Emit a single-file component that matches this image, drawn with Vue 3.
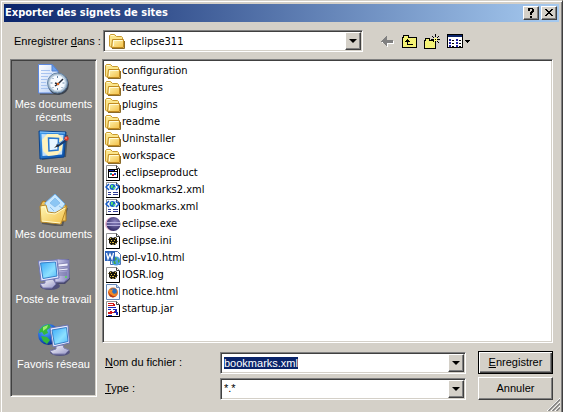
<script setup>
import { onMounted, ref } from 'vue'

const places = [
  { icon: 'recent', label: 'Mes documents récents' },
  { icon: 'desktop', label: 'Bureau' },
  { icon: 'documents', label: 'Mes documents' },
  { icon: 'computer', label: 'Poste de travail' },
  { icon: 'network', label: 'Favoris réseau' }
]

const files = [
  { icon: 'folder', name: 'configuration' },
  { icon: 'folder', name: 'features' },
  { icon: 'folder', name: 'plugins' },
  { icon: 'folder', name: 'readme' },
  { icon: 'folder', name: 'Uninstaller' },
  { icon: 'folder', name: 'workspace' },
  { icon: 'unknown', name: '.eclipseproduct' },
  { icon: 'xml', name: 'bookmarks2.xml' },
  { icon: 'xml', name: 'bookmarks.xml' },
  { icon: 'eclipse', name: 'eclipse.exe' },
  { icon: 'gnu', name: 'eclipse.ini' },
  { icon: 'word', name: 'epl-v10.html' },
  { icon: 'gnu', name: 'IOSR.log' },
  { icon: 'firefox', name: 'notice.html' },
  { icon: 'jar', name: 'startup.jar' }
]

const fileName = ref('bookmarks.xml')
const nameInput = ref(null)

onMounted(() => {
  nameInput.value.focus()
  nameInput.value.select()
})
</script>

<template>
  <svg class="sprite" width="0" height="0" aria-hidden="true">
    <defs>
      <linearGradient id="gFolder" x1="0" y1="0" x2="1" y2="1">
        <stop offset="0" stop-color="#fff7b8" /><stop offset="1" stop-color="#f2bf45" />
      </linearGradient>
      <linearGradient id="gPage" x1="0" y1="0" x2="1" y2="1">
        <stop offset="0" stop-color="#ffffff" /><stop offset="1" stop-color="#b4cdf4" />
      </linearGradient>
      <linearGradient id="gPad" x1="0" y1="0" x2="1" y2="1">
        <stop offset="0" stop-color="#3f9df0" /><stop offset="1" stop-color="#0a4fa8" />
      </linearGradient>
      <linearGradient id="gScreen" x1="0" y1="0" x2="1" y2="1">
        <stop offset="0" stop-color="#3aa8f8" /><stop offset="0.6" stop-color="#8ce0ff" /><stop offset="1" stop-color="#55b8f8" />
      </linearGradient>
      <linearGradient id="gCase" x1="0" y1="0" x2="1" y2="0">
        <stop offset="0" stop-color="#d9d9f4" /><stop offset="1" stop-color="#8484bc" />
      </linearGradient>
      <linearGradient id="gBase" x1="0" y1="0" x2="1" y2="1">
        <stop offset="0" stop-color="#ffffff" /><stop offset="1" stop-color="#9898c8" />
      </linearGradient>
      <radialGradient id="gGlobe" cx="0.35" cy="0.3" r="0.75">
        <stop offset="0" stop-color="#62b4ff" /><stop offset="0.6" stop-color="#1a62d8" /><stop offset="1" stop-color="#062a80" />
      </radialGradient>
      <radialGradient id="gEclipse" cx="0.6" cy="0.35" r="0.7">
        <stop offset="0" stop-color="#8c84c0" /><stop offset="1" stop-color="#2c2560" />
      </radialGradient>

      <symbol id="folder" viewBox="0 0 16 16">
        <path d="M0.500 13V2.500L1.500 1.500H5.500L7.500 3.500H12.500L13.500 4.500V14H1.500Z" fill="#fbe58a" stroke="#c99a2e" />
        <path d="M3.500 6.500H14.500V14.500H2.500Z" fill="url(#gFolder)" stroke="#c08a20" />
        <path d="M4.500 13V7.500H13.500M2 2.500H5" fill="none" stroke="#fffbd8" />
        <path d="M3 15.500H15.500V8" fill="none" stroke="#8a6a28" />
      </symbol>

      <symbol id="page" viewBox="0 0 16 16">
        <path d="M1.500 15.500V0.500H11.500L14.500 3.500V15.500Z" fill="#fff" stroke="#949494" />
        <path d="M11.500 0.500V3.500H14.500" fill="none" stroke="#404040" />
        <path d="M14.500 4V15.500H1" fill="none" stroke="#000" />
      </symbol>

      <symbol id="unknown" viewBox="0 0 16 16">
        <use href="#page" width="16" height="16" />
        <g shape-rendering="crispEdges">
          <path d="M3 4H13V13H3Z" fill="#000" /><path d="M4 7H12V12H4Z" fill="#fff" />
          <path d="M4 5H9V6H4Z" fill="#1428a8" /><path d="M10 5H12V6H10Z" fill="#fff" />
          <path d="M5 8H7V10H5Z" fill="#1a9090" /><path d="M7 9H9V11H7Z" fill="#d82020" /><path d="M9 8H11V10H9Z" fill="#2040c0" />
        </g>
      </symbol>

      <symbol id="xml" viewBox="0 0 16 16">
        <use href="#page" width="16" height="16" />
        <path d="M4 2L1 5L4 8M11 2L14 5L11 8" fill="none" stroke="#1058c8" stroke-width="1.500" />
        <circle cx="7.500" cy="5" r="3" fill="#1468c8" /><path d="M6 3H8V5L7 6H6ZM9 5H10V7H8Z" fill="#58e070" />
        <path d="M3 10H6V11H3ZM8 10H13V11H8ZM3 12H6V13H3ZM8 12H13V13H8Z" fill="#303c94" />
      </symbol>

      <symbol id="eclipse" viewBox="0 0 16 16">
        <circle cx="7" cy="8" r="7" fill="#e7b8cf" />
        <circle cx="8.500" cy="8" r="7" fill="url(#gEclipse)" />
        <path d="M2 6H15V7H2ZM2 9H15V10H2Z" fill="#b4aedc" /><path d="M2 7.500H15V8.500H2Z" fill="#7770ac" />
      </symbol>

      <symbol id="gnu" viewBox="0 0 16 16">
        <use href="#page" width="16" height="16" />
        <path d="M4 5L6 4L8 5L10 4L12 5V10L10 12H6L4 10Z" fill="#171408" />
        <path d="M5 5H6V6H5ZM10 5H11V6H10ZM6 7H7V8H6ZM9 7H10V8H9ZM7 9H9V10H7ZM5 9H6V10H5ZM10 10H11V11H10Z" fill="#d8b840" />
        <path d="M3 6H4V7H3ZM12 8H13V9H12ZM7 11H9V12H7Z" fill="#887840" />
      </symbol>

      <symbol id="word" viewBox="0 0 16 16">
        <path d="M5.500 1.500H12.500L15.500 4.500V14.500H5.500Z" fill="#fff" stroke="#5070b0" />
        <circle cx="11" cy="11" r="4.500" fill="#48a0e0" /><path d="M8 9L11 7L12 9L10 11L11 14L9 14ZM13 9L15 11L13 13Z" fill="#48a848" />
        <path d="M0 1H10V11H0Z" fill="#2c64bc" />
        <path d="M1.500 3L3 9L5 4L7 9L8.500 3" fill="none" stroke="#fff" stroke-width="1.300" />
      </symbol>

      <symbol id="firefox" viewBox="0 0 16 16">
        <path d="M1.500 15.500V0.500H11.500L14.500 3.500V15.500Z" fill="#f5f9ff" stroke="#6688b8" />
        <path d="M11.500 0.500V3.500H14.500" fill="#c8dcf4" stroke="#6688b8" />
        <circle cx="8" cy="8.500" r="5" fill="#e87520" />
        <circle cx="8.500" cy="7.500" r="3.300" fill="#2870c4" />
        <path d="M4 5L6 6L8 5L7 8L9 10L11 9L10 12L6 12L4 10Z" fill="#f08828" />
        <path d="M3 7L5 10L8 12L11 12L8 13.500L5 12.500Z" fill="#b83818" />
      </symbol>

      <symbol id="jar" viewBox="0 0 16 16">
        <use href="#page" width="16" height="16" />
        <g shape-rendering="crispEdges">
          <path d="M3 2H9V3H3ZM3 4H8V5H3ZM8 3H10V5H8Z" fill="#d01818" />
          <path d="M3 6H11V7H3ZM3 8H6V9H3ZM8 8H12V9H8Z" fill="#1828b8" />
          <path d="M3 11H5V10H7V11H9V10H10V12H7V13H3Z" fill="#d01818" />
          <path d="M10 9H12V11H13V14H11V12H9V11H10ZM3 14H7V15H3Z" fill="#1828b8" />
        </g>
      </symbol>

      <symbol id="recent" viewBox="0 0 32 32">
        <path d="M2 30H21V10L15 3" fill="none" stroke="#444" stroke-width="2" opacity="0.6" />
        <path d="M0.500 0.500H14L20 7V29H0.500Z" fill="url(#gPage)" stroke="#5c88e0" />
        <path d="M14 0.500V7H20Z" fill="#6ca0ec" stroke="#5080d0" />
        <path d="M3 6.500H12M3 9.500H14M3 12.500H10M3 15.500H9M3 18.500H8M3 21.500H9M3 24.500H11" stroke="#a8c4f0" />
        <circle cx="20.500" cy="20.500" r="10.500" fill="#3c4450" />
        <circle cx="19.500" cy="19" r="10" fill="#a8bccc" stroke="#6484a8" />
        <circle cx="19.500" cy="19" r="7.800" fill="#f7fbff" stroke="#d0e0f0" />
        <path d="M19.500 12V14M19.500 24V26M12.500 19H14.500M24.500 19H26.500M14.500 14L15.500 15M14.500 24L15.500 23M24.500 24L23.500 23" stroke="#6888a8" />
        <path d="M17 19L20 20L25 15M20 20L17 22" fill="none" stroke="#202838" stroke-width="1.500" />
        <circle cx="20" cy="20" r="1.300" fill="#e06820" />
      </symbol>

      <symbol id="desktop" viewBox="0 0 32 32">
        <path d="M3 4L30 6L28 28L4 31Z" fill="#303840" opacity="0.6" />
        <path d="M1 2L28 3L26 28L2 30Z" fill="url(#gPad)" stroke="#0a438c" />
        <path d="M2 3L27 4" stroke="#90ccff" />
        <path d="M3.500 5L25.500 6L24 25.500L4.500 27Z" fill="#c0e0fc" />
        <path d="M9 5H20L25 10L24 21L19 26L10 27L5 22L4 11Z" fill="#fff3bc" />
        <path d="M10.500 9L20.500 9.500L20 21L11 22Z" fill="#e8f6ff" stroke="#2878d0" stroke-width="1.500" />
        <path d="M19 17L28 11" stroke="#183c70" stroke-width="3" />
        <path d="M19 16L27 10" stroke="#78b8f0" /><path d="M16 19L20 15L21 17Z" fill="#222" />
        <circle cx="28.500" cy="9.500" r="2.300" fill="#d83828" /><circle cx="28" cy="9" r="1" fill="#ff9080" />
      </symbol>

      <symbol id="documents" viewBox="0 0 32 32">
        <path d="M4 29L24 32L29 14" fill="none" stroke="#303030" stroke-width="2" opacity="0.5" />
        <path d="M3 10L5 7L11 8L14 11H28V27H4Z" fill="#eec35a" stroke="#a87820" />
        <path d="M7 9L17 0L27 10L18 23H8Z" fill="#c9e8ff" stroke="#70b0e8" />
        <path d="M12 9L17 4L22 9L17 13ZM12 13L16 17M21 12L24 14" fill="#8cc6f4" stroke="#8cc0ec" />
        <path d="M2 12L8 11L10 18L17 19L29 12L23 30L3 28Z" fill="url(#gFolder)" stroke="#b98929" />
        <path d="M4 13L7 13L9 19L17 20L27 14M4 27L22 29" fill="none" stroke="#fff9cc" />
      </symbol>

      <symbol id="computer" viewBox="0 0 32 32">
        <path d="M16 3L20 0H31L32 20L27 25H16Z" fill="#48486c" />
        <path d="M16 2L20 0L31 1V19L26 23H17Z" fill="url(#gCase)" stroke="#8080b4" />
        <path d="M20 5L30 4V7L20 8ZM20 10L30 9V11L20 12Z" fill="#f1f1ff" stroke="#7878ac" stroke-width="0.800" />
        <path d="M21 14H29M21 16H29" stroke="#7474a8" /><circle cx="28" cy="18" r="1" fill="#50e050" />
        <ellipse cx="12" cy="27" rx="10" ry="4" fill="#50507c" />
        <path d="M7 20H15L18 25L14 29H5L2 25L7 24Z" fill="url(#gBase)" stroke="#7878b0" />
        <path d="M0.500 2L19 1L21 19L3 22Z" fill="#e4e7ff" stroke="#6e78ba" />
        <path d="M2.500 4L17.500 3L19 17L5 19.500Z" fill="url(#gScreen)" stroke="#3880c8" />
      </symbol>

      <symbol id="network" viewBox="0 0 32 32">
        <circle cx="10.500" cy="10.500" r="10.500" fill="url(#gGlobe)" />
        <path d="M5 2L11 0L13 3L9 6L10 9L6 11L4 8L1 9L2 5ZM3 12L9 13L12 16L9 20L5 17ZM13 6L17 4L18 9L15 12L12 9Z" fill="#35b83c" />
        <path d="M5 3L10 1L9 4L5 7Z" fill="#9cec70" />
        <ellipse cx="22" cy="28" rx="10" ry="4" fill="#555580" />
        <path d="M18 21H25L26 24L31 26L27 30H15L12 27L18 25Z" fill="url(#gBase)" stroke="#8080b0" />
        <path d="M12 4L30 1L31.500 19L15 23Z" fill="#e8eaff" stroke="#6872b0" />
        <path d="M14 6L28.500 3.500L30 17.500L16.500 20.500Z" fill="url(#gScreen)" stroke="#3880c8" />
      </symbol>

      <pattern id="dither" width="2" height="2" patternUnits="userSpaceOnUse">
        <path d="M0 0H2V2H0Z" fill="#ffff60" /><path d="M0 0H1V1H0ZM1 1H2V2H1Z" fill="#e8e48c" />
      </pattern>
    </defs>
  </svg>

  <main class="dialog">
    <header class="title-bar">
      <h1>Exporter des signets de sites</h1>
      <button type="button" class="caption" aria-label="Aide">
        <svg width="12" height="10" viewBox="0 0 12 10" shape-rendering="crispEdges">
          <path d="M3 0H8V1H9V4H8V5H7V7H5V4H6V3H7V1H5V3H3V1ZM5 8H7V10H5Z" />
        </svg>
      </button>
      <button type="button" class="caption close" aria-label="Fermer">
        <svg width="12" height="10" viewBox="0 0 12 10" shape-rendering="crispEdges">
          <path d="M2 1H4V2H5V3H7V2H8V1H10V2H9V3H8V4H7V5H8V6H9V7H10V8H8V7H7V6H5V7H4V8H2V7H3V6H4V5H5V4H4V3H3V2H2Z" />
        </svg>
      </button>
    </header>

    <div class="lookup">
      <label for="folder-select">Enregistrer <u>d</u>ans :</label>
      <div class="combo folder-combo">
        <svg width="16" height="16"><use href="#folder" /></svg>
        <select id="folder-select"><option>eclipse311</option></select>
        <span class="drop"><i></i></span>
      </div>
      <div class="tools">
        <button type="button" aria-label="Précédent" disabled>
          <svg width="16" height="16" viewBox="0 0 16 16" shape-rendering="crispEdges">
            <path d="M3 9H4V10H5V11H6V12H7V13H8V14H9V11H15V8H14V10H3Z" fill="#fff" />
            <path d="M2 8H3V7H4V6H5V5H6V4H7V3H8V7H14V10H8V13H7V12H6V11H5V10H4V9H2Z" fill="#808080" />
          </svg>
        </button>
        <button type="button" aria-label="Dossier parent">
          <svg width="16" height="16" viewBox="0 0 16 16" shape-rendering="crispEdges">
            <path d="M1.500 14.500V4.500H2.500V2.500H7.500V4.500H15.500V14.500Z" fill="url(#dither)" stroke="#000" />
            <path d="M6 6H7V7H8V8H9V9H7V11H12V12H6V9H4V8H5V7H6Z" />
          </svg>
        </button>
        <button type="button" aria-label="Nouveau dossier">
          <svg width="18" height="16" viewBox="0 0 18 16" shape-rendering="crispEdges">
            <path d="M1.500 15.500V7.500H2.500V5.500H6.500V7.500H12.500V15.500Z" fill="url(#dither)" stroke="#000" />
            <path d="M12 1H13V4H12ZM9 3H10V4H9ZM10 4H11V5H10ZM15 3H16V4H15ZM14 4H15V5H14ZM8 6H11V7H8ZM14 6H17V7H14ZM14 8H15V9H14ZM15 9H16V10H15ZM12 9H13V11H12ZM10 8H11V9H10Z" />
            <path d="M11 5H14V8H11Z" fill="#ffff80" /><path d="M12 6H13V7H12Z" />
          </svg>
        </button>
        <button type="button" aria-label="Affichage">
          <svg width="24" height="16" viewBox="0 0 24 16" shape-rendering="crispEdges">
            <path d="M0.500 1.500H15.500V14.500H0.500Z" fill="#fff" stroke="#000" />
            <path d="M1 2H15V4H1Z" fill="#0a246a" />
            <path d="M2 6H4V8H2ZM2 9H4V11H2ZM2 12H4V14H2ZM9 6H11V8H9ZM9 9H11V11H9ZM9 12H11V14H9Z" fill="#2020a0" />
            <path d="M5 7H7V8H5ZM5 10H7V11H5ZM5 13H7V14H5ZM12 7H14V8H12ZM12 10H14V11H12ZM12 13H14V14H12Z" />
            <path d="M18 7H23V8H22V9H21V10H20V9H19V8H18Z" />
          </svg>
        </button>
      </div>
    </div>

    <div class="body">
      <nav class="places" aria-label="Emplacements">
        <button v-for="place in places" :key="place.icon" type="button">
          <svg width="32" height="32"><use :href="'#' + place.icon" /></svg>
          <span>{{ place.label }}</span>
        </button>
      </nav>

      <div class="content">
        <ul class="files">
          <li v-for="file in files" :key="file.name">
            <svg width="16" height="16"><use :href="'#' + file.icon" /></svg>
            <span>{{ file.name }}</span>
          </li>
        </ul>

        <form class="fields" @submit.prevent>
          <label for="file-name"><u>N</u>om du fichier :</label>
          <div class="combo">
            <input id="file-name" ref="nameInput" v-model="fileName" type="text" autocomplete="off" spellcheck="false" />
            <span class="drop"><i></i></span>
          </div>
          <button type="submit" class="action default"><u>E</u>nregistrer</button>
          <label for="file-type"><u>T</u>ype :</label>
          <div class="combo">
            <select id="file-type"><option>*.*</option></select>
            <span class="drop"><i></i></span>
          </div>
          <button type="button" class="action">Annuler</button>
        </form>
      </div>
    </div>

    <svg class="grip" width="13" height="13" viewBox="0 0 13 13" aria-hidden="true">
      <path d="M0 13L13 0M4 13L13 4M8 13L13 8" stroke="#fff" />
      <path d="M1.500 13L13 1.500M5.500 13L13 5.500M9.500 13L13 9.500" stroke="#808080" stroke-width="1.500" />
    </svg>
  </main>
</template>

<style>
body {
  background: #d4d0c8;
}
</style>

<style scoped>
.sprite {
  position: absolute;
}

.dialog {
  position: relative;
  box-sizing: border-box;
  min-height: 100vh;
  padding: 3px;
  border: 1px solid;
  border-color: #d4d0c8 #404040 #404040 #d4d0c8;
  background: #d4d0c8;
  box-shadow: inset 1px 1px #fff, inset -1px -1px #808080;
  color: #000;
  font: 11px/13px "Liberation Sans", Arial, sans-serif;
}

button,
input,
select {
  box-sizing: border-box;
  margin: 0;
  padding: 0;
  border: 0;
  border-radius: 0;
  outline: 0;
  background: none;
  color: inherit;
  font: inherit;
}

svg {
  display: block;
  flex: none;
}

.title-bar {
  display: flex;
  align-items: center;
  height: 18px;
  padding-right: 2px;
  background: linear-gradient(to right, #0a246a, #a6caf0);
}

h1 {
  flex: 1;
  margin: 0;
  padding-left: 1px;
  color: #fff;
  font: bold 11px/18px "DejaVu Sans Condensed", "DejaVu Sans", sans-serif;
}

.caption,
.drop,
.action {
  background: #d4d0c8;
  border: 1px solid;
  border-color: #fff #404040 #404040 #fff;
  box-shadow: inset -1px -1px #808080;
}

.caption {
  width: 16px;
  height: 14px;
  padding: 1px;
}

.close {
  margin-left: 2px;
}

.lookup {
  display: flex;
  align-items: center;
  padding: 8px 0 7px 10px;
}

.lookup label {
  width: 89px;
}

.combo {
  display: flex;
  align-items: center;
  position: relative;
  box-sizing: border-box;
  height: 22px;
  min-width: 0;
  padding: 2px;
  border: 1px solid;
  border-color: #808080 #fff #fff #808080;
  background: #fff;
  box-shadow: inset 1px 1px #404040, inset -1px -1px #d4d0c8;
}

.folder-combo {
  flex: 0 1 260px;
  padding-left: 5px;
  font-family: "DejaVu Sans Condensed", "DejaVu Sans", sans-serif;
}

.combo input,
.combo select {
  flex: 1;
  width: 100%;
  min-width: 0;
  height: 16px;
  padding-right: 16px;
  appearance: none;
}

.folder-combo select {
  padding-left: 5px;
}

input::selection {
  background: #0a246a;
  color: #fff;
}

.drop {
  position: absolute;
  top: 1px;
  right: 1px;
  bottom: 1px;
  display: flex;
  align-items: center;
  justify-content: center;
  box-sizing: border-box;
  width: 16px;
  pointer-events: none;
}

.drop i {
  border: 4px solid transparent;
  border-top-color: #000;
  border-bottom: 0;
}

.tools {
  display: flex;
  gap: 6px;
  padding-left: 16px;
}

.body {
  display: grid;
  grid-template-columns: 87px minmax(0, 1fr);
  gap: 5px;
  padding: 0 6px 10px;
}

.places {
  display: flex;
  flex-direction: column;
  box-sizing: border-box;
  margin-bottom: 3px;
  padding: 4px 2px;
  border: 1px solid;
  border-color: #808080 #fff #fff #808080;
  background: #808080;
  box-shadow: inset 1px 1px #404040, inset -1px -1px #d4d0c8;
  color: #fff;
}

.places button {
  display: flex;
  flex-direction: column;
  align-items: center;
  gap: 2px;
  height: 65px;
}

.files {
  box-sizing: border-box;
  height: 284px;
  margin: 0;
  padding: 2px;
  border: 1px solid;
  border-color: #808080 #fff #fff #808080;
  background: #fff;
  box-shadow: inset 1px 1px #404040, inset -1px -1px #d4d0c8;
  list-style: none;
  font-family: "DejaVu Sans Condensed", "DejaVu Sans", sans-serif;
}

.files li {
  display: flex;
  align-items: center;
  gap: 1px;
  height: 17px;
}

.fields {
  display: grid;
  grid-template-columns: 115px minmax(0, 1fr) 75px;
  align-items: center;
  gap: 3px 0;
  padding: 8px 0 0 3px;
}

.fields .combo {
  margin-right: 12px;
}

.fields .combo input,
.fields .combo select {
  padding-left: 1px;
}

.action {
  height: 23px;
}

.default {
  border-color: #000;
  box-shadow: inset 1px 1px #fff, inset -1px -1px #404040, inset -2px -2px #808080;
}

.grip {
  position: absolute;
  right: 2px;
  bottom: 2px;
}
</style>
